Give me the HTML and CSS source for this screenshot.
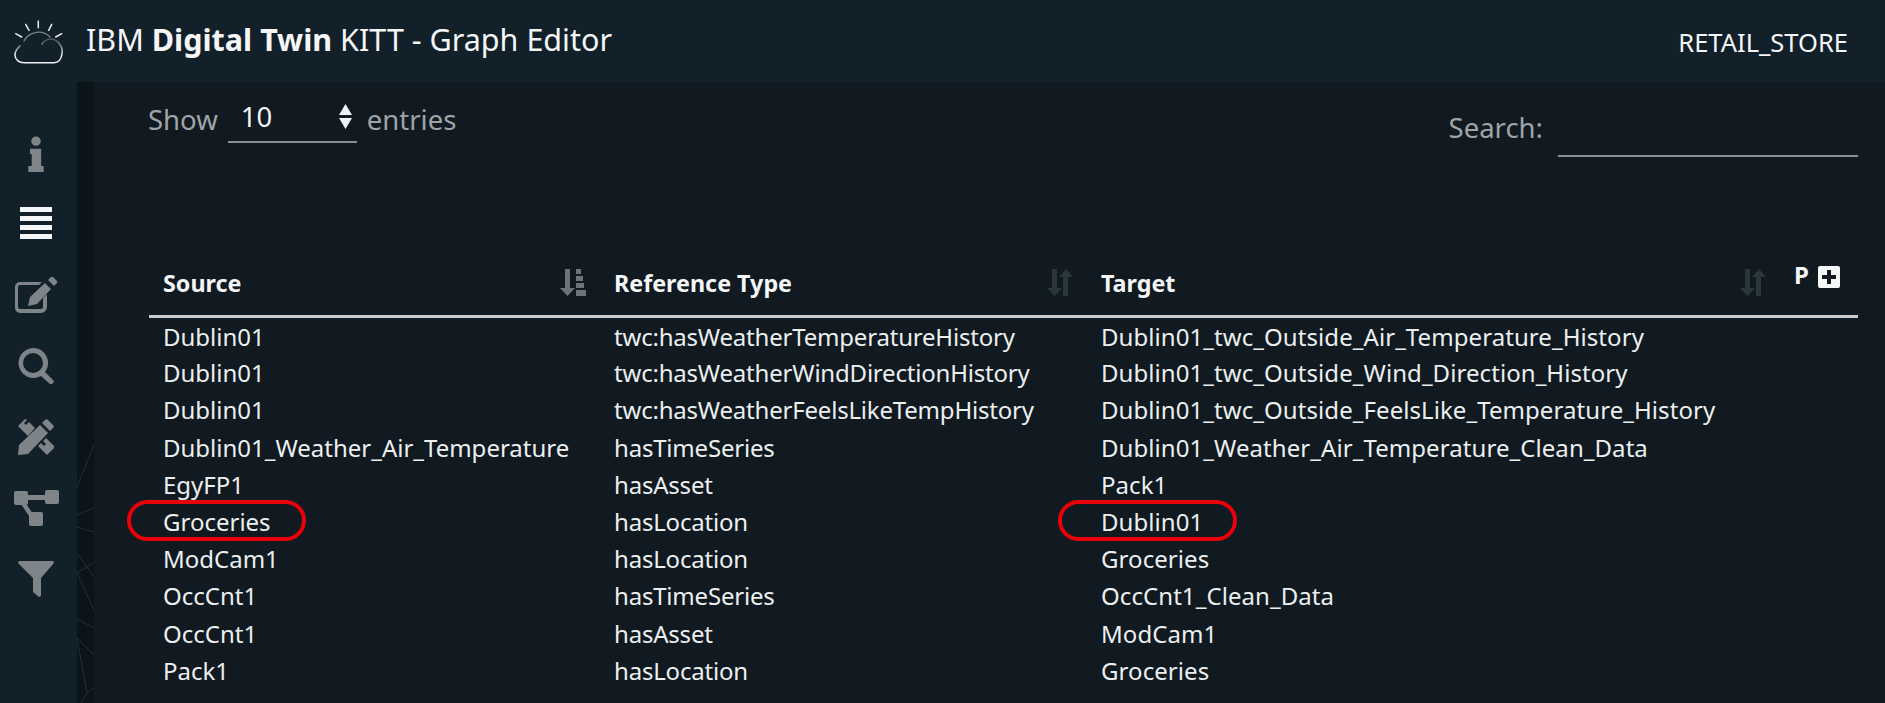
FILE: index.html
```html
<!DOCTYPE html>
<html lang="en">
<head>
  <meta charset="UTF-8" />
  <title>IBM Digital Twin KITT - Graph Editor</title>
  <link rel="stylesheet" href="styles.css">
</head>
<body>
  <header class="topbar">
    <div class="brand">
      <svg class="logo" viewBox="14 19 50 44" fill="none" stroke-linecap="round">
        <defs>
          <linearGradient id="cloud-edge" gradientUnits="userSpaceOnUse" x1="0" y1="62" x2="0" y2="40">
            <stop offset="0.35" stop-color="#eef1f2"/>
            <stop offset="1" stop-color="#4c5a63"/>
          </linearGradient>
        </defs>
        <path d="M38.300 20v6.700M25.700 23.300l3.300 6M51.700 23.300l-3 6M15.700 32.700l6 3.300M61.700 32.700l-6 3.300" stroke="#e8ecee" stroke-width="1.500"/>
        <path d="M24 40c4-8 17-13 26-4" stroke="#75838c" stroke-width="1.300"/>
        <path d="M42 43c3-5 9-6 13-4 6 3 8 9 7 14-1 6-4 8.700-8 8.700H24c-5 0-9-3-9-8 0-4 2-6 5-9" stroke="url(#cloud-edge)" stroke-width="1.500"/>
      </svg>
      <h1 class="title">IBM <b>Digital Twin</b> KITT - Graph Editor</h1>
    </div>
    <span class="scope">RETAIL_STORE</span>
  </header>

  <div class="page">
    <nav class="sidebar">
      <svg class="nav-icon" viewBox="0 0 36 42"><circle cx="18" cy="6" r="5.500"/><path d="M11 15h13v20h3v7H9v-7h4V21h-2z"/></svg>
      <svg class="nav-icon active" viewBox="0 0 32 32"><path d="M0 0h32v5H0zM0 9h32v5H0zM0 18h32v5H0zM0 27h32v5H0z"/></svg>
      <svg class="nav-icon wide" viewBox="0 0 45 36"><path fill-rule="evenodd" d="M6 5h22l-3 3H6a2 2 0 0 0-2 2v20a2 2 0 0 0 2 2h21a2 2 0 0 0 2-2V21l4-4v13a6 6 0 0 1-6 6H6a5 5 0 0 1-5-5V10a5 5 0 0 1 5-5z"/><path d="M31 6l6 6-14 15-9 2 2-9zM34 3l3-3a2 2 0 0 1 2 0l4 4a2 2 0 0 1 0 2l-3 3z"/></svg>
      <svg class="nav-icon" viewBox="0 0 36 36"><path fill-rule="evenodd" d="M15 0a15 15 0 0 1 12 24l8 8a2 2 0 0 1 0 3l-1 1h-2l-9-8A15 15 0 1 1 15 0zm0 5a10 10 0 1 0 0 20 10 10 0 0 0 0-20z"/></svg>
      <svg class="nav-icon" viewBox="0 0 36 36">
        <path d="M1 26L22 6l8 8-20 21-10 1zM24 4l3-3a2 2 0 0 1 3 0l5 5a2 2 0 0 1 0 3l-3 3z"/>
        <path d="M0 7l7-7 2 1-3 3 2 2 3-3 6 6-7 8zM28 19l8 8v2l-7 7-9-9 3-3 3 3 2-2-3-3z"/>
      </svg>
      <svg class="nav-icon wide" viewBox="0 0 45 36">
        <rect y="1" width="14" height="14" rx="2"/>
        <rect x="31" width="14" height="14" rx="2"/>
        <rect x="15" y="22" width="14" height="14" rx="2"/>
        <path d="M13 5h19v5H13zM7 14l4-2 8 12-4 2z"/>
      </svg>
      <svg class="nav-icon" viewBox="0 0 36 36"><path d="M1 0h34l1 2-13 15v18l-2 1-6-5V17L0 2z"/></svg>
    </nav>
    <div class="strip">
      <svg class="web" viewBox="0 0 17 621" preserveAspectRatio="none" fill="none" stroke="#262f35">
        <path d="M17 363L0 405M0 433l17-7M0 445l17 5M0 471l17 24M16 481L0 491l17 37M0 537l17 9M0 556l17 17M0 556l10 55M17 606l-7 5-6 10"/>
      </svg>
    </div>
    <main class="content">
      <div class="table-tools">
        <div class="length">
          <span>Show</span>
          <div class="length-select">
            <span>10</span>
            <svg class="updown" viewBox="0 0 13 25"><path d="M6.500 0L13 11H0zM0 14h13L6.500 25z"/></svg>
          </div>
          <span>entries</span>
        </div>
        <div class="search">
          <span>Search:</span>
          <div class="search-input"></div>
        </div>
      </div>

      <table class="refs">
        <thead>
          <tr>
            <th class="col-source">Source
              <svg class="sort sorted" viewBox="0 0 26 27"><path d="M5 0h5v19h5l-7.500 8L0 19h5zM16 0h5v5h-5zM16 7h7v5h-7zM16 14h8v5h-8zM16 21h10v6H16z"/></svg>
            </th>
            <th class="col-type">Reference Type
              <svg class="sort" viewBox="0 0 26 27"><path d="M5 0h5v19h5l-7.500 8L0 19h5zM19 0l7 8h-5v19h-5V8h-4z"/></svg>
            </th>
            <th class="col-target">Target
              <svg class="sort" viewBox="0 0 26 27"><path d="M5 0h5v19h5l-7.500 8L0 19h5zM19 0l7 8h-5v19h-5V8h-4z"/></svg>
            </th>
            <th class="col-add">
              <div class="add"><span>P</span><svg class="plus" viewBox="0 0 22 22"><path fill-rule="evenodd" d="M2 0h18a2 2 0 0 1 2 2v18a2 2 0 0 1-2 2H2a2 2 0 0 1-2-2V2a2 2 0 0 1 2-2zm7 4v5H4v4h5v5h4v-5h5V9h-5V4z"/></svg></div>
            </th>
          </tr>
        </thead>
        <tbody>
          <tr><td>Dublin01</td><td>twc:hasWeatherTemperatureHistory</td><td>Dublin01_twc_Outside_Air_Temperature_History</td><td></td></tr>
          <tr><td>Dublin01</td><td>twc:hasWeatherWindDirectionHistory</td><td>Dublin01_twc_Outside_Wind_Direction_History</td><td></td></tr>
          <tr><td>Dublin01</td><td>twc:hasWeatherFeelsLikeTempHistory</td><td>Dublin01_twc_Outside_FeelsLike_Temperature_History</td><td></td></tr>
          <tr><td>Dublin01_Weather_Air_Temperature</td><td>hasTimeSeries</td><td>Dublin01_Weather_Air_Temperature_Clean_Data</td><td></td></tr>
          <tr><td>EgyFP1</td><td>hasAsset</td><td>Pack1</td><td></td></tr>
          <tr><td class="circled">Groceries</td><td>hasLocation</td><td class="circled">Dublin01</td><td></td></tr>
          <tr><td>ModCam1</td><td>hasLocation</td><td>Groceries</td><td></td></tr>
          <tr><td>OccCnt1</td><td>hasTimeSeries</td><td>OccCnt1_Clean_Data</td><td></td></tr>
          <tr><td>OccCnt1</td><td>hasAsset</td><td>ModCam1</td><td></td></tr>
          <tr><td>Pack1</td><td>hasLocation</td><td>Groceries</td><td></td></tr>
        </tbody>
      </table>
    </main>
  </div>
</body>
</html>
```
FILE: styles.css
```css
* {
  box-sizing: border-box;
  margin: 0;
  padding: 0;
}

html, body {
  height: 100%;
  overflow: hidden;
}

body {
  font-family: 'Noto Sans', sans-serif;
  background: #101a20;
  color: #eceff0;
  display: flex;
  flex-direction: column;
}

.topbar {
  height: 82px;
  flex: none;
  background: #12202a;
  display: flex;
  align-items: center;
  justify-content: space-between;
  padding: 0 37px 4px 14px;
}

.brand {
  display: flex;
  align-items: center;
  gap: 22px;
}

.logo {
  width: 50px;
  height: 44px;
  margin-top: 5px;
}

.title {
  font-size: 30.500px;
  font-weight: 400;
  color: #f4f6f7;
}

.title b {
  font-weight: 700;
}

.scope {
  font-size: 25.500px;
  margin-top: 6px;
  color: #f4f6f7;
}

.page {
  flex: 1;
  display: flex;
  min-height: 0;
}

.sidebar {
  width: 77px;
  background: #12202a;
  display: flex;
  flex-direction: column;
  align-items: center;
  padding: 54px 5px 0 0;
  gap: 35px;
}

.nav-icon {
  width: 36px;
  height: 36px;
  fill: #7f8488;
}

.nav-icon.wide {
  width: 45px;
}

.nav-icon.active {
  width: 32px;
  height: 32px;
  margin-bottom: 3px;
  fill: #f4f6f7;
}

.strip {
  width: 17px;
  background: #0b1419;
}

.web {
  display: block;
  width: 17px;
  height: 100%;
}

.content {
  flex: 1;
  padding-left: 55px;
  padding-right: 27px;
}

.table-tools {
  display: flex;
  justify-content: space-between;
  height: 173px;
  font-size: 27.500px;
  color: #a0a4a6;
}

.length {
  display: flex;
  align-items: flex-start;
  gap: 10px;
  padding-top: 19px;
  margin-left: -1px;
}

.length-select {
  width: 129px;
  height: 45px;
  margin-top: -3px;
  padding: 0 5px 0 13px;
  border-bottom: 2px solid #8a8f92;
  color: #f0f2f3;
  font-size: 27.500px;
  display: flex;
  justify-content: space-between;
  align-items: flex-start;
}

.updown {
  width: 13px;
  height: 25px;
  margin-top: 6px;
  fill: #f0f2f3;
}

.search {
  display: flex;
  align-items: flex-start;
  gap: 15px;
  padding-top: 27px;
}

.search-input {
  width: 300px;
  height: 48px;
  border-bottom: 2px solid #8a8f92;
}

.refs {
  width: 1709px;
  border-collapse: collapse;
  table-layout: fixed;
  font-size: 24px;
}

.refs th {
  position: relative;
  height: 61px;
  padding: 0 14px 4px;
  text-align: left;
  font-weight: 700;
  font-size: 23.300px;
  color: #f4f6f7;
  border-bottom: 3px solid #c9cbcc;
}

.refs td {
  height: 37.200px;
  padding: 2px 14px 0;
  white-space: nowrap;
}

.refs td:nth-child(2) {
  letter-spacing: -0.2px;
}

.refs td:nth-child(3) {
  letter-spacing: 0.07px;
}

.col-source { width: 451px; }
.col-type { width: 487px; }
.col-target { width: 693px; }

.sort {
  position: absolute;
  right: 14px;
  top: 14px;
  width: 26px;
  height: 27px;
  fill: #2a353c;
}

.sort.sorted {
  fill: #6c7479;
}

.add {
  display: flex;
  align-items: flex-start;
  gap: 9px;
  padding-bottom: 12px;
  font-size: 24px;
  line-height: 18px;
}

.plus {
  width: 22px;
  height: 22px;
  fill: #f7f8f8;
}

.circled {
  position: relative;
}

/* red marker ring drawn over the two cells */
.circled::after {
  content: '';
  position: absolute;
  box-sizing: border-box;
  left: -22px;
  top: -2px;
  width: 179px;
  height: 41px;
  border: 4px solid #e8000b;
  border-radius: 21px;
}

.circled:nth-child(3)::after {
  left: -29px;
}
```
